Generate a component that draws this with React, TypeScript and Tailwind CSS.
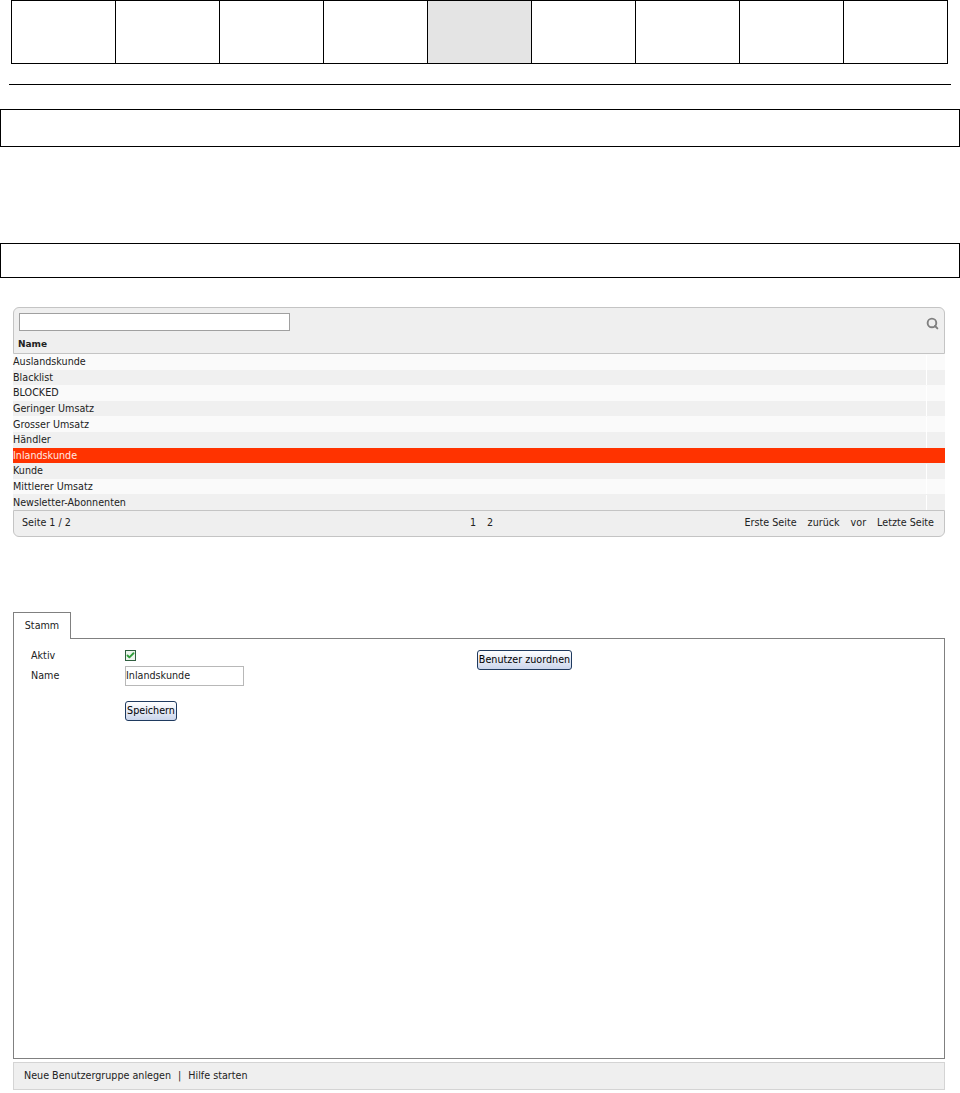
import { Search, Check } from 'lucide-react';

const rows = [
  'Auslandskunde',
  'Blacklist',
  'BLOCKED',
  'Geringer Umsatz',
  'Grosser Umsatz',
  'Händler',
  'Inlandskunde',
  'Kunde',
  'Mittlerer Umsatz',
  'Newsletter-Abonnenten',
];

const SELECTED = 6;
const ACTIVE_NAV = 4;

function ActionButton({ label, className }: { label: string; className: string }) {
  return (
    <button className={`block whitespace-nowrap rounded-[3px] border border-[#1f3a5f] bg-gradient-to-b from-white to-[#ccd6ec] p-0 text-center text-[9.6px] leading-none text-black ${className}`}>
      {label}
    </button>
  );
}

export default function App() {
  return (
    <div className="h-[1093px] w-[960px] overflow-hidden bg-white font-['DejaVu_Sans',sans-serif] text-[9.6px] text-[#222]">
      {/* Top navigation cells */}
      <div className="ml-[11px] grid h-[64px] w-[937px] grid-cols-[repeat(9,104px)] border-y border-l border-black">
        {Array.from({ length: 9 }).map((_, i) => (
          <div key={i} className={`border-r border-black ${i === ACTIVE_NAV ? 'bg-[#e4e4e4]' : ''}`} />
        ))}
      </div>

      <div className="ml-[9px] mt-[20px] h-px w-[942px] bg-black" />

      <div className="mt-[24px] h-[38px] w-[960px] border border-black" />
      <div className="mt-[96px] h-[35px] w-[960px] border border-black" />

      {/* Group list */}
      <div className="ml-[13px] mt-[29px] w-[932px]">
        <div className="flex h-[47px] flex-col rounded-t-[6px] border border-[#c4c4c4] bg-[#efefef] pl-[5px] pr-[5px] pt-[5px]">
          <div className="flex items-center justify-between">
            <input readOnly className="h-[18px] w-[271px] border border-[#a0a0a0] bg-white" />
            <Search size={13} strokeWidth={3.5} className="mt-[3px] text-[#808080]" />
          </div>
          <div className="ml-[-1px] mt-[7px] text-[9px] font-bold leading-[12px] text-[#222]">Name</div>
        </div>
        <div>
          {rows.map((row, i) => (
            <div
              key={row}
              className={`flex h-[15.6px] items-center whitespace-nowrap pt-[0.5px] leading-none ${
                i === SELECTED
                  ? 'bg-[#ff3300] text-[#ffe8e0]'
                  : i % 2 === 0
                    ? 'bg-[#fafafa]'
                    : 'bg-[#f0f0f0]'
              }`}
            >
              <span className="flex-1">{row}</span>
              {i !== SELECTED && <span className="h-full w-[19px] border-l border-white" />}
            </div>
          ))}
        </div>
        <div className="grid h-[27px] grid-cols-3 items-center rounded-b-[6px] border border-[#c4c4c4] bg-[#efefef] pb-[1px] pl-[8px] pr-[10px]">
          <span>Seite 1 / 2</span>
          <span className="flex justify-center gap-[11px] pl-[7px]">
            <span>1</span>
            <span>2</span>
          </span>
          <span className="flex justify-end gap-[11px] whitespace-nowrap">
            <span>Erste Seite</span>
            <span>zurück</span>
            <span>vor</span>
            <span>Letzte Seite</span>
          </span>
        </div>
      </div>

      {/* Detail tabs */}
      <div className="ml-[13px] mt-[75px] w-[932px]">
        <div className="relative z-10 -mb-px flex h-[27px] w-[58px] items-center justify-center border border-b-0 border-[#808080] bg-white">
          Stamm
        </div>
        <div className="flex h-[421px] border border-[#808080] pl-[17px] pt-[11px]">
          <div className="w-[446px]">
            <div className="flex h-[12px] items-center">
              <span className="w-[94px]">Aktiv</span>
              <span className="flex h-[11px] w-[11px] items-center justify-center border border-[#2f5f3f] bg-[#eef5ee]">
                <Check size={9} strokeWidth={5} className="text-[#2f9e3a]" />
              </span>
            </div>
            <div className="mt-[4px] flex h-[20px] items-center">
              <span className="w-[94px]">Name</span>
              <input
                readOnly
                value="Inlandskunde"
                className="h-[20px] w-[119px] border border-[#b8b8b8] bg-white pl-0 text-[9.6px] text-[#222]"
              />
            </div>
            <ActionButton label="Speichern" className="ml-[94px] mt-[15px] h-[20px] w-[52px]" />
          </div>
          <ActionButton label="Benutzer zuordnen" className="h-[20px] w-[95px]" />
        </div>
        <div className="mt-[3px] flex h-[28px] items-center gap-[7px] border border-[#d4d4d4] bg-[#efefef] pl-[10px] pt-[1px]">
          <span>Neue Benutzergruppe anlegen</span>
          <span>|</span>
          <span>Hilfe starten</span>
        </div>
      </div>
    </div>
  );
}
